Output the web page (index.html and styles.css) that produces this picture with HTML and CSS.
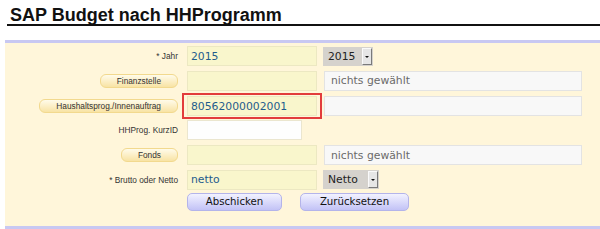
FILE: index.html
```
<!DOCTYPE html>
<html lang="de">

<head>
    <meta charset="UTF-8">
    <title>SAP Budget nach HHProgramm</title>
    <link rel="stylesheet" href="styles.css">
</head>

<body>
    <h1 class="page-title">SAP Budget nach HHProgramm</h1>
    <form class="panel">
        <div class="row">
            <div class="lbl">* Jahr</div>
            <input class="field" type="text" value="2015">
            <div class="sel sel-jahr"><span class="sel-text">2015</span><span class="sel-arrow"></span></div>
        </div>
        <div class="row">
            <div class="lbl"><button type="button" class="pick">Finanzstelle</button></div>
            <input class="field" type="text" value="">
            <input class="info" type="text" value="nichts gewählt" readonly>
        </div>
        <div class="row">
            <div class="lbl"><button type="button" class="pick">Haushaltsprog./Innenauftrag</button></div>
            <span class="marked"><input class="field" type="text" value="80562000002001"></span>
            <input class="info" type="text" value="" readonly>
        </div>
        <div class="row">
            <div class="lbl">HHProg. KurzID</div>
            <input class="field field-short" type="text" value="">
        </div>
        <div class="row">
            <div class="lbl"><button type="button" class="pick">Fonds</button></div>
            <input class="field" type="text" value="">
            <input class="info" type="text" value="nichts gewählt" readonly>
        </div>
        <div class="row row-last">
            <div class="lbl">* Brutto oder Netto</div>
            <input class="field" type="text" value="netto">
            <div class="sel sel-netto"><span class="sel-text">Netto</span><span class="sel-arrow"></span></div>
        </div>
        <div class="actions">
            <button type="button" class="act act-send">Abschicken</button>
            <button type="reset" class="act act-reset">Zurücksetzen</button>
        </div>
    </form>
</body>

</html>
```

FILE: styles.css
```
body {
    margin: 0;
    background: #fff;
    font-family: 'Liberation Sans', Arial, sans-serif;
    overflow: hidden;
}

.page-title {
    margin: 0 0 0 7px;
    padding: 7px 0 0 3px;
    font-size: 18px;
    line-height: 17px;
    font-weight: bold;
    color: #111;
    border-bottom: 2px solid #111;
}

.panel {
    margin: 14px 0 0 5px;
    padding: 3px 0 15px 0;
    background: #fff6da;
    border-top: 3px solid #c8c8f2;
    border-bottom: 3px solid #c8c8f2;
}

.row {
    display: flex;
    align-items: center;
    height: 20px;
    margin-bottom: 4.8px;
}

.row-last {
    margin-bottom: 3px;
}

.lbl {
    width: 173px;
    margin-right: 9px;
    display: flex;
    justify-content: flex-end;
    font-size: 8.3px;
    color: #333;
}

.pick {
    height: 14px;
    padding: 0 16px;
    border: 1px solid #f2d98e;
    border-radius: 6px;
    background: linear-gradient(#fffbea, #f8e3a4);
    font-family: 'Liberation Sans', Arial, sans-serif;
    font-size: 8.3px;
    line-height: 12px;
    color: #333;
}

input {
    box-sizing: border-box;
    height: 20px;
    margin: 0;
    font-family: 'DejaVu Sans', Verdana, sans-serif;
    font-size: 10.8px;
    outline: none;
}

.field {
    width: 130px;
    padding: 0 3px;
    background: #f9f6cc;
    border: 1px solid #ece8c2;
    color: #1f5c8c;
}

.field-short {
    width: 115px;
    background: #fefefe;
    border-color: #ebe6cf;
}

.info {
    width: 258px;
    margin-left: 7px;
    padding: 0 6px;
    background: #f8f8f8;
    border: 1px solid #e3e3e3;
    color: #6a6a6a;
}

.marked {
    position: relative;
    display: block;
    height: 20px;
}

.marked::after {
    content: "";
    position: absolute;
    top: -3px;
    bottom: -3px;
    left: -5px;
    right: -5px;
    border: 2px solid #e23c3c;
}

.sel {
    box-sizing: border-box;
    height: 19px;
    margin-left: 6px;
    display: flex;
    align-items: center;
    background: #d5d2cd;
    font-family: 'DejaVu Sans', Verdana, sans-serif;
    font-size: 10.8px;
    color: #222;
}

.sel-jahr {
    width: 50px;
}

.sel-netto {
    width: 56px;
}

.sel-text {
    flex: 1;
    padding-left: 5px;
}

.sel-arrow {
    position: relative;
    box-sizing: border-box;
    width: 10px;
    height: 17px;
    margin-right: 1px;
    background: #e6e6e6;
    border-right: 1px solid #7a7a7a;
    border-bottom: 1px solid #7a7a7a;
    border-left: 1px solid #fafafa;
    border-top: 1px solid #fafafa;
}

.sel-arrow::after {
    content: "";
    position: absolute;
    left: 2px;
    top: 7px;
    border-left: 2px solid transparent;
    border-right: 2px solid transparent;
    border-top: 2px solid #111;
}

.actions {
    display: flex;
    gap: 18px;
    margin-left: 182px;
}

.act {
    height: 18px;
    padding: 0;
    border: 1px solid #b4b4ea;
    border-radius: 5px;
    background: linear-gradient(#f2f2ff, #c2c2f6);
    font-family: 'DejaVu Sans', Verdana, sans-serif;
    font-size: 10.2px;
    color: #111;
}

.act-send {
    width: 95px;
}

.act-reset {
    width: 109px;
}
```
